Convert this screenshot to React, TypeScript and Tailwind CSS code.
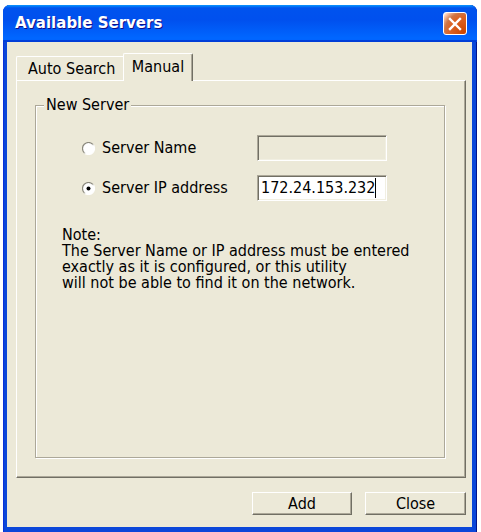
import { useState } from 'react'

const ui = "font-['DejaVu_Sans_Condensed','DejaVu_Sans',sans-serif]"

function Radio({ checked, id }: { checked?: boolean; id: string }) {
  return (
    <svg width="13" height="13" viewBox="0 0 13 13" className="shrink-0">
      <defs>
        <linearGradient id={id} x1="0" y1="0" x2="1" y2="1">
          <stop offset="0.45" stopColor="#8c8a7e" />
          <stop offset="0.6" stopColor="#ffffff" />
        </linearGradient>
      </defs>
      <circle cx="6.5" cy="6.5" r="6" fill="#fff" stroke={`url(#${id})`} strokeWidth="1.2" />
      {checked && <circle cx="6.5" cy="6.5" r="2" fill="#000" />}
    </svg>
  )
}

export default function App() {
  const [ip, setIp] = useState('172.24.153.232')
  const [mode, setMode] = useState<'name' | 'ip'>('ip')

  return (
    <div className={`w-[481px] h-[532px] bg-white pt-[5px] pl-[3px] ${ui}`}>
      <div className="w-[474px] h-[527px] rounded-t-[7px] bg-[#0b47d9] flex flex-col overflow-hidden shadow-[inset_-1px_0_0_#00138c,inset_1px_0_0_#0831d9]">
        {/* title bar */}
        <div className="h-[37px] shrink-0 flex items-center justify-between pl-[12px] pr-[10px] bg-[linear-gradient(180deg,#0997ff,#0053ee_8%,#0050ee_40%,#0066ff_88%,#0066ff_93%,#005bff_95%,#003dd7_96%,#003dd7)]">
          <span className="text-white font-bold text-[15px] leading-none font-['DejaVu_Sans',sans-serif] [text-shadow:1px_1px_#0f1089]">
            Available Servers
          </span>
          <button className="w-[24px] h-[23px] rounded-[3px] border border-white flex items-center justify-center bg-[radial-gradient(circle_at_90%_90%,#cc4600_0,#dc6527_55%,#cd7546_70%,#ffccb2_90%,#fff_100%)]">
            <svg width="14" height="14" viewBox="0 0 14 14">
              <path d="M2 2 L12 12 M12 2 L2 12" stroke="#fff" strokeWidth="2.4" strokeLinecap="square" />
            </svg>
          </button>
        </div>

        {/* client area */}
        <div className="flex-1 ml-[4px] mr-[5px] mb-[5px] bg-[#ece9d8] pl-[9px] pr-[6px] pt-[11px] text-black text-[16px] leading-[16px]">
          <div className="relative z-10 -mb-px flex items-end h-[28px]">
            <div className="h-[24px] mb-px w-[107px] flex items-center pl-[11px] border-t border-l border-white rounded-tl-[2px]">
              Auto Search
            </div>
            <div className="h-[28px] w-[70px] flex items-center justify-center pb-[2px] bg-[#ece9d8] border-t border-l border-r border-white border-r-[#716f64] shadow-[inset_-1px_0_0_#aca899] rounded-t-[2px]">
              Manual
            </div>
          </div>

          <div className="h-[398px] w-[450px] border border-white border-r-[#716f64] border-b-[#716f64] shadow-[inset_-1px_-1px_0_#aca899] pt-[24px] pl-[18px]">
            <div className="relative w-[410px] h-[353px] border border-[#aca899] shadow-[inset_1px_1px_0_#fff,1px_1px_0_#fff]">
              <span className="absolute -top-[9px] left-[8px] px-[2px] bg-[#ece9d8]">New Server</span>

              <div className="mt-[29px] pl-[46px] flex items-center h-[26px]">
                <label className="w-[175px] flex items-center gap-[7px]" onClick={() => setMode('name')}>
                  <Radio id="r1" checked={mode === 'name'} />
                  <span>Server Name</span>
                </label>
                <div className="w-[130px] h-[26px] border border-[#aca899] border-r-white border-b-white shadow-[inset_1px_1px_0_#716f64,inset_-1px_-1px_0_#f1efe2] bg-[#ece9d8]" />
              </div>

              <div className="mt-[14px] pl-[46px] flex items-center h-[26px]">
                <label className="w-[175px] flex items-center gap-[7px]" onClick={() => setMode('ip')}>
                  <Radio id="r2" checked={mode === 'ip'} />
                  <span>Server IP address</span>
                </label>
                <div className="w-[130px] h-[26px] border border-[#aca899] border-r-white border-b-white shadow-[inset_1px_1px_0_#716f64,inset_-1px_-1px_0_#f1efe2] bg-white flex items-center pl-[3px]">
                  <span>{ip}</span>
                  <span className="w-px h-[20px] bg-black" />
                  <input className="hidden" value={ip} onChange={(e) => setIp(e.target.value)} />
                </div>
              </div>

              <div className="mt-[26px] pl-[26px]">
                <p>Note:</p>
                <p>The Server Name or IP address must be entered</p>
                <p>exactly as it is configured, or this utility</p>
                <p>will not be able to find it on the network.</p>
              </div>
            </div>
          </div>

          <div className="mt-[14px] flex justify-end gap-[13px] w-[450px]">
            <button className="w-[100px] h-[23px] border border-white border-r-[#716f64] border-b-[#716f64] shadow-[inset_-1px_-1px_0_#aca899] bg-[#ece9d8]">
              Add
            </button>
            <button className="w-[101px] h-[23px] border border-white border-r-[#716f64] border-b-[#716f64] shadow-[inset_-1px_-1px_0_#aca899] bg-[#ece9d8]">
              Close
            </button>
          </div>
        </div>
      </div>
    </div>
  )
}
